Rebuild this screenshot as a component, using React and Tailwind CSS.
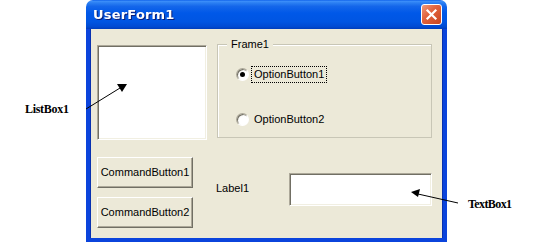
import React from 'react';

const ui = { fontFamily: '"Liberation Sans", Arial, sans-serif' };
const note = { fontFamily: '"Liberation Serif", "Times New Roman", serif' };

function Sunken({ className }) {
  return (
    <div
      className={`bg-white border border-t-[#aca899] border-l-[#aca899] border-b-white border-r-white shadow-[inset_1px_1px_0_#716f64,inset_-1px_-1px_0_#f1efe2] ${className}`}
    />
  );
}

function CmdButton({ children }) {
  return (
    <div className="w-[96px] h-[31px] flex items-center justify-center bg-[#ece9d8] border border-t-white border-l-white border-b-[#716f64] border-r-[#716f64] shadow-[inset_-1px_-1px_0_#aca899] text-[11px] text-black">
      {children}
    </div>
  );
}

function Radio({ checked }) {
  return (
    <div className="w-[13px] h-[13px] rounded-full bg-[radial-gradient(circle_at_65%_65%,#ffffff_0%,#ffffff_45%,#e4e2d6_100%)] border border-t-[#aca899] border-l-[#aca899] border-b-white border-r-white shadow-[inset_1px_1px_0_#716f64] flex items-center justify-center">
      {checked && <div className="w-[5px] h-[5px] rounded-full bg-black" />}
    </div>
  );
}

export default function App() {
  return (
    <div className="relative w-[556px] h-[242px] bg-white overflow-hidden" style={ui}>
      <div className="pl-[86px]">
        <div className="w-[361px] h-[242px] flex flex-col">
          {/* title bar */}
          <div className="h-[29px] rounded-t-[7px] flex items-center justify-between pl-[7px] pr-[5px] bg-[linear-gradient(to_bottom,#0a5ce8_0%,#3d8ffa_4%,#2b7ff2_10%,#1466ea_22%,#0058e8_45%,#0055e2_75%,#004ad2_92%,#003dba_100%)]">
            <span className="text-white font-bold text-[13px] tracking-[0.2px] drop-shadow-[1px_1px_0_#0a1f7a]" style={{ fontFamily: '"DejaVu Sans", sans-serif' }}>
              UserForm1
            </span>
            <div className="w-[21px] h-[21px] rounded-[3px] border border-white bg-[linear-gradient(135deg,#f09a7c_0%,#e2643f_40%,#c9451f_100%)] flex items-center justify-center">
              <svg width="13" height="13" viewBox="0 0 13 13">
                <path d="M2.5 2.5 L10.5 10.5 M10.5 2.5 L2.5 10.5" stroke="white" strokeWidth="2.2" strokeLinecap="square" />
              </svg>
            </div>
          </div>

          {/* body */}
          <div className="flex-1 bg-[#ece9d8] border-x-4 border-b-4 border-[#0b44dc] shadow-[inset_1px_0_0_#0831b0,inset_-1px_0_0_#0831b0] pl-[7px] pt-[15px]">
            <div className="flex items-start">
              <Sunken className="mt-[1px] w-[110px] h-[95px]" />
              <div className="relative ml-[10px] w-[215px] h-[94px] border border-[#c8c6b6] shadow-[inset_1px_1px_0_white] pt-[21px] pl-[18px]">
                <span className="absolute -top-[8px] left-[9px] px-[4px] bg-[#ece9d8] text-[11px] leading-[14px] text-black">
                  Frame1
                </span>
                <div className="flex items-center">
                  <Radio checked />
                  <span className="ml-[2px] px-[2px] border border-dotted border-black text-[11px] leading-[15px] text-black">
                    OptionButton1
                  </span>
                </div>
                <div className="flex items-center mt-[29px]">
                  <Radio />
                  <span className="ml-[2px] px-[3px] text-[11px] leading-[15px] text-black">OptionButton2</span>
                </div>
              </div>
            </div>

            <div className="flex items-start mt-[17px]">
              <div className="flex flex-col gap-[9px]">
                <CmdButton>CommandButton1</CmdButton>
                <CmdButton>CommandButton2</CmdButton>
              </div>
              <div className="ml-[23px] w-[73px] mt-[24px] text-[11px] leading-[14px] text-black">Label1</div>
              <Sunken className="mt-[16px] w-[143px] h-[33px]" />
            </div>
          </div>
        </div>
      </div>

      {/* annotations */}
      <span className="absolute left-[25px] top-[101px] text-[12px] leading-[16px] font-bold text-black tracking-[-0.3px]" style={note}>
        ListBox1
      </span>
      <span className="absolute left-[468px] top-[196px] text-[12px] leading-[16px] font-bold text-black tracking-[-0.6px]" style={note}>
        TextBox1
      </span>
      <svg className="absolute inset-0 pointer-events-none" width="556" height="242">
        <line x1="86" y1="109" x2="120" y2="88" stroke="black" strokeWidth="1" />
        <polygon points="127,84 117,84 122,92" fill="black" />
        <line x1="458" y1="203" x2="418" y2="194" stroke="black" strokeWidth="1" />
        <polygon points="411,192 420,189 418,197" fill="black" />
      </svg>
    </div>
  );
}
